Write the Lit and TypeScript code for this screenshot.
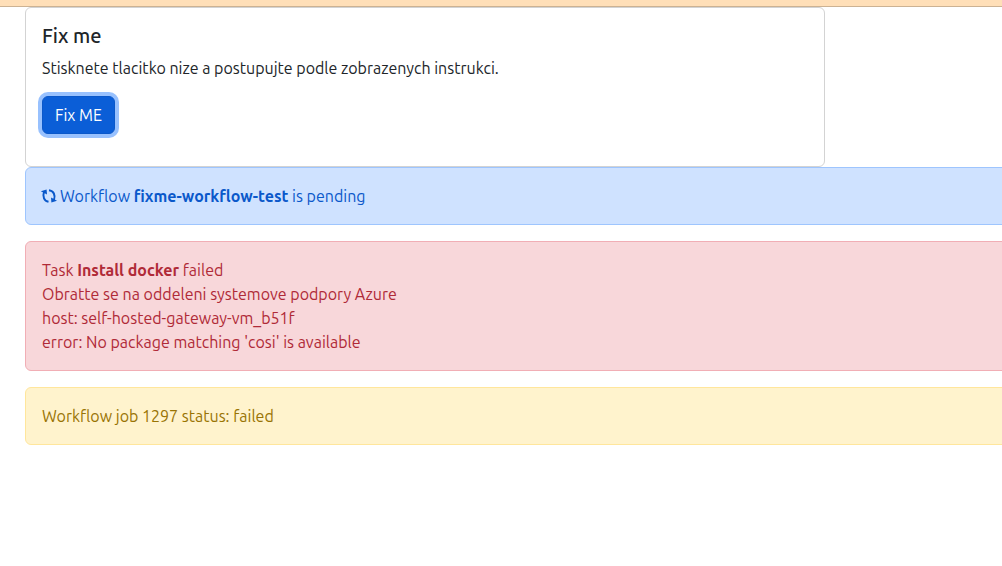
import { LitElement, html, css } from "lit";
import { customElement, property } from "lit/decorators.js";

@customElement("status-alert")
class StatusAlert extends LitElement {
  @property({ reflect: true }) variant = "primary";

  static styles = css`
    :host {
      display: block;
      box-sizing: border-box;
      padding: 16px;
      border: 1px solid #9ec5fe;
      border-radius: 6px;
      background: #cfe2ff;
      color: #0a58ca;
    }
    :host([variant="danger"]) {
      border-color: #f1aeb5;
      background: #f8d7da;
      color: #b02a37;
    }
    :host([variant="warning"]) {
      border-color: #ffe69c;
      background: #fff3cd;
      color: #997404;
    }
  `;

  render() {
    return html`<div role="alert"><slot></slot></div>`;
  }
}

@customElement("app-root")
class AppRoot extends LitElement {
  static styles = css`
    :host {
      display: block;
      overflow-x: hidden;
      font: 400 16px/24px Ubuntu, "Noto Sans", sans-serif;
      color: #212529;
      background: #fff;
    }
    .topbar {
      height: 6px;
      background: #ffdfb8;
      border-bottom: 1px solid #ccb293;
    }
    .content {
      padding-left: 25px;
      margin-right: -12px;
    }
    .card {
      box-sizing: border-box;
      max-width: 800px;
      padding: 16px 16px 32px;
      border: 1px solid #d3d3d3;
      border-radius: 6px;
    }
    .title {
      margin: 0 0 8px;
      font-size: 20px;
      line-height: 24px;
      font-weight: 500;
    }
    .text {
      margin: 0 0 16px;
    }
    .action {
      display: block;
      font: inherit;
      color: #fff;
      padding: 6px 12px;
      background: #0b5ed7;
      border: 1px solid #0a58ca;
      border-radius: 6px;
      box-shadow: 0 0 0 4px #98c1fe;
      cursor: pointer;
    }
    .alerts {
      display: grid;
      gap: 16px;
    }
    .workflow {
      display: flex;
      align-items: center;
      gap: 2px;
    }
    .icon {
      width: 16px;
      height: 16px;
      flex: none;
      overflow: visible;
    }
  `;

  render() {
    return html`
      <div class="topbar"></div>
      <main class="content">
        <section class="card">
          <h5 class="title">Fix me</h5>
          <p class="text">Stisknete tlacitko nize a postupujte podle zobrazenych instrukci.</p>
          <button class="action" type="button">Fix ME</button>
        </section>
        <div class="alerts">
          <status-alert variant="primary">
            <div class="workflow">
              <svg class="icon" viewBox="0 0 16 16" fill="none" stroke="currentColor" stroke-width="2" aria-hidden="true">
                <path d="M6.500 13.800C2.200 13 0.300 8.500 2 4" />
                <path d="M-1.200 3.200L4.600 1.600L5 6.600Z" fill="currentColor" stroke="none" />
                <path d="M7 2.200C11.600 2.700 13.700 7.200 12 11.800" />
                <path d="M15 12.800L9.400 14.400L9 9.400Z" fill="currentColor" stroke="none" />
              </svg>
              <span>Workflow <b>fixme-workflow-test</b> is pending</span>
            </div>
          </status-alert>
          <status-alert variant="danger">
            <div>Task <b>Install docker</b> failed</div>
            <div>Obratte se na oddeleni systemove podpory Azure</div>
            <div>host: self-hosted-gateway-vm_b51f</div>
            <div>error: No package matching 'cosi' is available</div>
          </status-alert>
          <status-alert variant="warning">Workflow job 1297 status: failed</status-alert>
        </div>
      </main>
    `;
  }
}
